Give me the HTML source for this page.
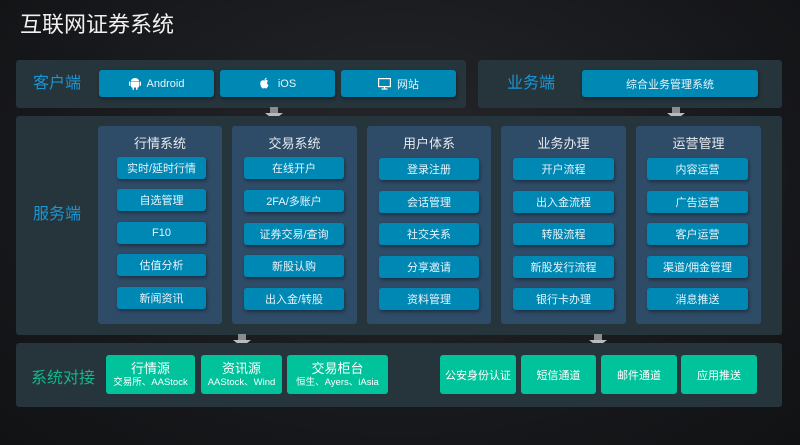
<!DOCTYPE html>
<html><head><meta charset="utf-8"><style>
*{margin:0;padding:0;box-sizing:border-box}
body{width:800px;height:445px;overflow:hidden;background:radial-gradient(ellipse at 50% 40%,#26282c 0%,#16171a 70%,#111214 100%);font-family:"Liberation Sans","Noto Sans CJK SC",sans-serif;position:relative;color:#fff}
.a{position:absolute}
.panel{position:absolute;background:#26343b;border-radius:3px}
.btn{position:absolute;background:#0088b5;border-radius:3px;color:#e8f4fa;font-size:11px;display:flex;align-items:center;justify-content:center;box-shadow:1px 2px 3px rgba(0,0,0,.35)}
.col{position:absolute;background:#2e4b67;border-radius:3px;top:126px;height:198px}
.ct{position:absolute;width:100%;top:10px;text-align:center;font-size:13px;line-height:15px;color:#e6eaee}
.lbl{position:absolute;font-size:16px;line-height:17px;color:#1b96d4}
.g{position:absolute;background:#00c39b;border-radius:3px;color:#fff;text-align:center;display:flex;flex-direction:column;align-items:center;justify-content:center;top:355px;height:39px}
.g b{font-weight:normal;font-size:13px;line-height:15px}
.g i{font-style:normal;font-size:9.5px;line-height:13px}
.arr{position:absolute;width:18px;height:13px}
</style></head><body>
<div class="a" style="left:20px;top:12px;font-size:22px;line-height:26px;color:#f0f0f0">互联网证券系统</div>

<div class="panel" style="left:16px;top:60px;width:450px;height:48px"></div>
<div class="lbl" style="left:33px;top:75px">客户端</div>
<div class="btn" style="left:99px;top:70px;width:115px;height:27px"><svg width="12" height="13" viewBox="0 0 12 13" style="margin-right:6px"><path d="M2 4.5h8v5a1 1 0 0 1-1 1H3a1 1 0 0 1-1-1z M2 4a4 3 0 0 1 8 0z" fill="#fff"/><rect x="0" y="4.5" width="1.4" height="4.5" rx=".7" fill="#fff"/><rect x="10.6" y="4.5" width="1.4" height="4.5" rx=".7" fill="#fff"/><rect x="3.5" y="10" width="1.5" height="3" rx=".7" fill="#fff"/><rect x="7" y="10" width="1.5" height="3" rx=".7" fill="#fff"/></svg>Android</div>
<div class="btn" style="left:220px;top:70px;width:115px;height:27px"><svg width="11" height="13" viewBox="0 0 11 13" style="margin-right:8px"><path d="M5.5 3.5c1-.6 2.5-.8 3.6.6-1.6 1-1.3 3.3.4 3.9-.5 1.6-1.6 3.5-2.6 3.5-.8 0-1-.5-1.4-.5s-.7.5-1.5.5C2.5 11.5 0.5 7 1.5 5c.8-1.8 2.6-2 4-1.5zM5.6 3c0-1.2.9-2.2 2-2.3.1 1.2-.9 2.3-2 2.3z" fill="#fff"/></svg>iOS</div>
<div class="btn" style="left:341px;top:70px;width:115px;height:27px"><svg width="13" height="12" viewBox="0 0 13 12" style="margin-right:6px"><rect x=".6" y=".6" width="11.8" height="8" fill="none" stroke="#fff" stroke-width="1.2"/><path d="M6.5 8.6v2.2M3.5 11h6" stroke="#fff" stroke-width="1.2"/></svg>网站</div>

<div class="panel" style="left:478px;top:60px;width:304px;height:48px"></div>
<div class="lbl" style="left:507px;top:75px">业务端</div>
<div class="btn" style="left:582px;top:70px;width:176px;height:27px">综合业务管理系统</div>

<svg class="arr" style="left:265px;top:107px" viewBox="0 0 18 13"><rect x="5" y="0" width="8" height="6" fill="#8a8d90"/><path d="M0 6h18l-9 7z" fill="#b9bbbd"/></svg>
<svg class="arr" style="left:667px;top:107px" viewBox="0 0 18 13"><rect x="5" y="0" width="8" height="6" fill="#8a8d90"/><path d="M0 6h18l-9 7z" fill="#b9bbbd"/></svg>

<div class="panel" style="left:16px;top:116px;width:766px;height:219px"></div>
<div class="lbl" style="left:33px;top:206px">服务端</div>

<div class="col" style="left:98px;width:124px"><div class="ct">行情系统</div></div>
<div class="col" style="left:232px;width:125px"><div class="ct">交易系统</div></div>
<div class="col" style="left:367px;width:124px"><div class="ct">用户体系</div></div>
<div class="col" style="left:501px;width:125px"><div class="ct">业务办理</div></div>
<div class="col" style="left:636px;width:125px"><div class="ct">运营管理</div></div>

<div class="btn" style="left:117px;top:157px;width:89px;height:22px">实时/延时行情</div>
<div class="btn" style="left:117px;top:189px;width:89px;height:22px">自选管理</div>
<div class="btn" style="left:117px;top:222px;width:89px;height:22px">F10</div>
<div class="btn" style="left:117px;top:254px;width:89px;height:22px">估值分析</div>
<div class="btn" style="left:117px;top:287px;width:89px;height:22px">新闻资讯</div>

<div class="btn" style="left:244px;top:157px;width:100px;height:22px">在线开户</div>
<div class="btn" style="left:244px;top:190px;width:100px;height:22px">2FA/多账户</div>
<div class="btn" style="left:244px;top:223px;width:100px;height:22px">证券交易/查询</div>
<div class="btn" style="left:244px;top:255px;width:100px;height:22px">新股认购</div>
<div class="btn" style="left:244px;top:288px;width:100px;height:22px">出入金/转股</div>

<div class="btn" style="left:379px;top:158px;width:100px;height:22px">登录注册</div>
<div class="btn" style="left:379px;top:191px;width:100px;height:22px">会话管理</div>
<div class="btn" style="left:379px;top:223px;width:100px;height:22px">社交关系</div>
<div class="btn" style="left:379px;top:256px;width:100px;height:22px">分享邀请</div>
<div class="btn" style="left:379px;top:288px;width:100px;height:22px">资料管理</div>

<div class="btn" style="left:513px;top:158px;width:101px;height:22px">开户流程</div>
<div class="btn" style="left:513px;top:191px;width:101px;height:22px">出入金流程</div>
<div class="btn" style="left:513px;top:223px;width:101px;height:22px">转股流程</div>
<div class="btn" style="left:513px;top:256px;width:101px;height:22px">新股发行流程</div>
<div class="btn" style="left:513px;top:288px;width:101px;height:22px">银行卡办理</div>

<div class="btn" style="left:647px;top:158px;width:101px;height:22px">内容运营</div>
<div class="btn" style="left:647px;top:191px;width:101px;height:22px">广告运营</div>
<div class="btn" style="left:647px;top:223px;width:101px;height:22px">客户运营</div>
<div class="btn" style="left:647px;top:256px;width:101px;height:22px">渠道/佣金管理</div>
<div class="btn" style="left:647px;top:288px;width:101px;height:22px">消息推送</div>

<svg class="arr" style="left:233px;top:334px" viewBox="0 0 18 13"><rect x="5" y="0" width="8" height="6" fill="#8a8d90"/><path d="M0 6h18l-9 7z" fill="#b9bbbd"/></svg>
<svg class="arr" style="left:589px;top:334px" viewBox="0 0 18 13"><rect x="5" y="0" width="8" height="6" fill="#8a8d90"/><path d="M0 6h18l-9 7z" fill="#b9bbbd"/></svg>

<div class="panel" style="left:16px;top:343px;width:766px;height:64px"></div>
<div class="lbl" style="left:31px;top:370px;color:#10b989">系统对接</div>
<div class="g" style="left:106px;width:89px"><b>行情源</b><i>交易所、AAStock</i></div>
<div class="g" style="left:201px;width:81px"><b>资讯源</b><i>AAStock、Wind</i></div>
<div class="g" style="left:287px;width:101px"><b>交易柜台</b><i>恒生、Ayers、iAsia</i></div>
<div class="g" style="left:440px;width:76px;font-size:11px">公安身份认证</div>
<div class="g" style="left:521px;width:75px;font-size:11px">短信通道</div>
<div class="g" style="left:601px;width:76px;font-size:11px">邮件通道</div>
<div class="g" style="left:681px;width:76px;font-size:11px">应用推送</div>
</body></html>
